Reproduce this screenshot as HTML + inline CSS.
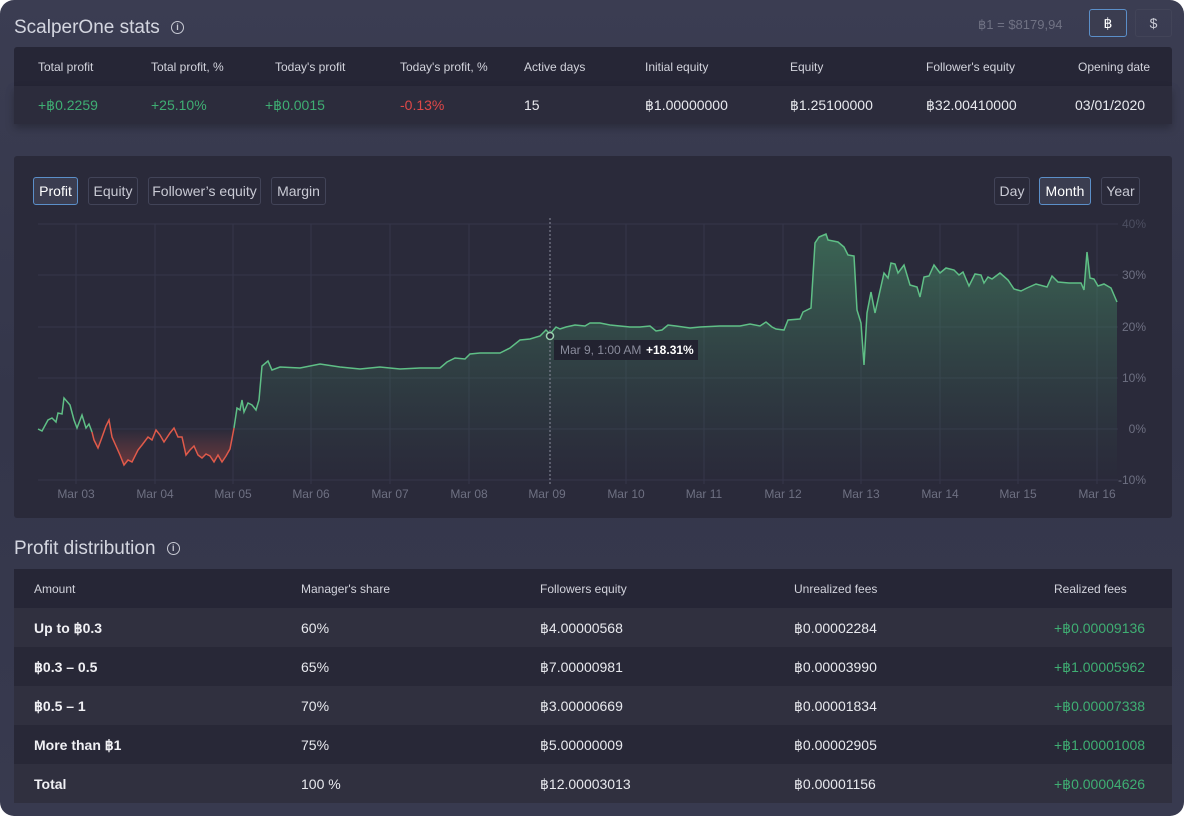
<!DOCTYPE html>
<html><head><meta charset="utf-8"><style>
*{margin:0;padding:0;box-sizing:border-box}
body{width:1184px;height:816px;overflow:hidden;background:#fff;font-family:"Liberation Sans",sans-serif;}
.page{position:absolute;left:0;top:0;width:1184px;height:816px;border-radius:14px;background:linear-gradient(180deg,#3b3d52 0%,#34364a 50%,#383a4f 100%);overflow:hidden}
.a{position:absolute;white-space:nowrap}
.title{font-size:19px;color:#d4d6e0}
.info{display:inline-block;width:13px;height:13px;border:1.3px solid #c8cad4;border-radius:50%;font-size:9px;line-height:11px;text-align:center;color:#c8cad4;font-weight:bold;vertical-align:middle}
.hd{font-size:12px;color:#d2d3dc}
.v{font-size:14px;color:#e8e9ee}
.g{color:#3fae73}.r{color:#e04848}
.btn{position:absolute;height:28px;border:1px solid #424458;border-radius:3px;font-size:14px;color:#c9cad4;line-height:26px;text-align:center}
.btn.on{border-color:#5b8fc9;background:#3b3d50;color:#fff}
.b{font-weight:bold;color:#f0f0f4}
</style></head><body><div class="page">
<div class="a title" style="left:14px;top:17px">ScalperOne stats <span class="info" style="margin-left:6px">i</span></div>
<div class="a" style="left:978px;top:17px;font-size:13px;color:#707284">฿1 = $8179,94</div>
<div class="btn on" style="left:1089px;top:9px;width:38px">฿</div>
<div class="btn" style="left:1135px;top:9px;width:37px">$</div>

<div class="a" style="left:14px;top:47px;width:1158px;height:39px;background:#262636;border-radius:3px 3px 0 0"></div>
<div class="a" style="left:14px;top:86px;width:1158px;height:38px;background:#2c2c3c;box-shadow:0 4px 8px rgba(0,0,0,.25)"></div>
<div class="a hd" style="left:38px;top:60px">Total profit</div>
<div class="a hd" style="left:151px;top:60px">Total profit, %</div>
<div class="a hd" style="left:275px;top:60px">Today's profit</div>
<div class="a hd" style="left:400px;top:60px">Today's profit, %</div>
<div class="a hd" style="left:524px;top:60px">Active days</div>
<div class="a hd" style="left:645px;top:60px">Initial equity</div>
<div class="a hd" style="left:790px;top:60px">Equity</div>
<div class="a hd" style="left:926px;top:60px">Follower's equity</div>
<div class="a hd" style="left:1078px;top:60px">Opening date</div>
<div class="a v g" style="left:38px;top:97px">+฿0.2259</div>
<div class="a v g" style="left:151px;top:97px">+25.10%</div>
<div class="a v g" style="left:265px;top:97px">+฿0.0015</div>
<div class="a v r" style="left:400px;top:97px">-0.13%</div>
<div class="a v" style="left:524px;top:97px">15</div>
<div class="a v" style="left:645px;top:97px">฿1.00000000</div>
<div class="a v" style="left:790px;top:97px">฿1.25100000</div>
<div class="a v" style="left:926px;top:97px">฿32.00410000</div>
<div class="a v" style="left:1075px;top:97px">03/01/2020</div>

<div class="a" style="left:14px;top:156px;width:1158px;height:362px;background:#2a2a3a;border-radius:3px"></div>
<div class="btn on" style="left:33px;top:177px;width:45px">Profit</div>
<div class="btn" style="left:88px;top:177px;width:50px">Equity</div>
<div class="btn" style="left:148px;top:177px;width:113px">Follower’s equity</div>
<div class="btn" style="left:271px;top:177px;width:55px">Margin</div>
<div class="btn" style="left:994px;top:177px;width:36px">Day</div>
<div class="btn on" style="left:1039px;top:177px;width:52px">Month</div>
<div class="btn" style="left:1101px;top:177px;width:39px">Year</div>

<svg class="a" style="left:0;top:0" width="1184" height="816">
<defs>
<linearGradient id="gg" x1="0" y1="230" x2="0" y2="480" gradientUnits="userSpaceOnUse"><stop offset="0" stop-color="#4a9a6c" stop-opacity=".55"/><stop offset="1" stop-color="#3a6a55" stop-opacity="0"/></linearGradient>
<linearGradient id="rg" x1="0" y1="429" x2="0" y2="470" gradientUnits="userSpaceOnUse"><stop offset="0" stop-color="#e05a4a" stop-opacity="0"/><stop offset="1" stop-color="#c84a40" stop-opacity=".45"/></linearGradient>
</defs>
<g stroke="#35364a" stroke-width="1">
<line x1="38" y1="224" x2="1118" y2="224"/><line x1="38" y1="275" x2="1118" y2="275"/><line x1="38" y1="327" x2="1118" y2="327"/><line x1="38" y1="378" x2="1118" y2="378"/><line x1="38" y1="429" x2="1118" y2="429"/><line x1="38" y1="480" x2="1118" y2="480"/>
<line x1="76" y1="224" x2="76" y2="484"/><line x1="155" y1="224" x2="155" y2="484"/><line x1="233" y1="224" x2="233" y2="484"/><line x1="311" y1="224" x2="311" y2="484"/><line x1="390" y1="224" x2="390" y2="484"/><line x1="469" y1="224" x2="469" y2="484"/><line x1="626" y1="224" x2="626" y2="484"/><line x1="704" y1="224" x2="704" y2="484"/><line x1="783" y1="224" x2="783" y2="484"/><line x1="861" y1="224" x2="861" y2="484"/><line x1="940" y1="224" x2="940" y2="484"/><line x1="1018" y1="224" x2="1018" y2="484"/><line x1="1097" y1="224" x2="1097" y2="484"/>
</g>
<polygon fill="url(#gg)" points="234,428 237,408 240,410 242,400 244,412 248,403 252,405 256,410 259,400 262,366 268,361 272,370 280,367 300,368 320,364 340,367 360,369 380,367 400,369 420,368 440,368 447,362 455,358 465,359 470,354 480,353 500,353 510,348 520,340 530,339 540,336 546,330 550,334 556,327 560,329 566,327 575,325 585,326 590,323 600,323 610,325 620,326 630,327 640,327 650,326 656,331 662,330 668,325 676,326 690,328 700,327 720,326 740,326 750,324 760,326 766,322 772,327 776,329 784,330 788,320 800,319 803,312 811,308 815,243 819,237 826,234 828,240 838,242 844,247 848,255 854,256 857,310 861,323 864,365 867,313 871,292 875,313 884,273 888,278 891,263 895,264 898,273 904,265 910,285 917,287 920,297 924,277 929,276 934,265 940,273 946,268 954,270 959,275 963,272 969,286 975,274 981,275 984,283 988,277 992,279 1000,273 1008,280 1014,289 1021,291 1027,288 1036,284 1047,287 1052,276 1058,282 1069,283 1081,283 1084,290 1087,252 1090,278 1094,279 1098,286 1104,284 1111,288 1117,302 1117,480 234,480"/>
<polygon fill="url(#rg)" points="90,429 94,440 98,448 101,440 106,429 112,437 116,446 120,455 124,465 128,460 132,462 138,450 142,445 148,437 152,440 156,430 160,435 164,442 170,433 174,429 178,437 182,437 186,455 190,450 194,446 198,455 202,458 206,454 210,456 214,462 218,455 222,462 226,456 230,449 234,429"/>
<polyline fill="none" stroke="#5fbf86" stroke-width="1.5" points="38,429 42,431 48,420 52,418 56,422 58,413 62,414 64,398 70,405 74,420 77,428 82,415 86,428 89,424 92,432"/>
<polyline fill="none" stroke="#e05a4a" stroke-width="1.5" points="92,432 94,440 98,448 101,440 106,426 109,420 112,437 116,446 120,455 124,465 128,460 132,462 138,450 142,445 148,437 152,440 156,430 160,435 164,442 170,433 174,428 178,437 182,437 186,455 190,450 194,446 198,455 202,458 206,454 210,456 214,462 218,455 222,462 226,456 230,449 234,428"/>
<polyline fill="none" stroke="#5fbf86" stroke-width="1.5" points="234,428 237,408 240,410 242,400 244,412 248,403 252,405 256,410 259,400 262,366 268,361 272,370 280,367 300,368 320,364 340,367 360,369 380,367 400,369 420,368 440,368 447,362 455,358 465,359 470,354 480,353 500,353 510,348 520,340 530,339 540,336 546,330 550,334 556,327 560,329 566,327 575,325 585,326 590,323 600,323 610,325 620,326 630,327 640,327 650,326 656,331 662,330 668,325 676,326 690,328 700,327 720,326 740,326 750,324 760,326 766,322 772,327 776,329 784,330 788,320 800,319 803,312 811,308 815,243 819,237 826,234 828,240 838,242 844,247 848,255 854,256 857,310 861,323 864,365 867,313 871,292 875,313 884,273 888,278 891,263 895,264 898,273 904,265 910,285 917,287 920,297 924,277 929,276 934,265 940,273 946,268 954,270 959,275 963,272 969,286 975,274 981,275 984,283 988,277 992,279 1000,273 1008,280 1014,289 1021,291 1027,288 1036,284 1047,287 1052,276 1058,282 1069,283 1081,283 1084,290 1087,252 1090,278 1094,279 1098,286 1104,284 1111,288 1117,302"/>
<line x1="550" y1="218" x2="550" y2="484" stroke="#8a8c9c" stroke-width="1" stroke-dasharray="2,2"/>
<circle cx="550" cy="336" r="3.5" fill="#2a2a3a" stroke="#9ad0ae" stroke-width="1.5"/>
<rect x="554" y="340" width="144" height="20" fill="#222230"/>
<text x="560" y="354" font-family="Liberation Sans" font-size="12" fill="#8a8c9c">Mar 9, 1:00 AM</text>
<text x="646" y="354" font-family="Liberation Sans" font-size="12" font-weight="bold" fill="#fff">+18.31%</text>
<g font-family="Liberation Sans" font-size="12" fill="#6e7082" text-anchor="middle">
<text x="76" y="498">Mar 03</text><text x="155" y="498">Mar 04</text><text x="233" y="498">Mar 05</text><text x="311" y="498">Mar 06</text><text x="390" y="498">Mar 07</text><text x="469" y="498">Mar 08</text><text x="547" y="498">Mar 09</text><text x="626" y="498">Mar 10</text><text x="704" y="498">Mar 11</text><text x="783" y="498">Mar 12</text><text x="861" y="498">Mar 13</text><text x="940" y="498">Mar 14</text><text x="1018" y="498">Mar 15</text><text x="1097" y="498">Mar 16</text>
</g>
<g font-family="Liberation Sans" font-size="12" fill="#6e7082" text-anchor="end">
<text x="1146" y="228" fill="#4c4e60">40%</text><text x="1146" y="279">30%</text><text x="1146" y="331">20%</text><text x="1146" y="382">10%</text><text x="1146" y="433">0%</text><text x="1146" y="484">-10%</text>
</g>
</svg>

<div class="a title" style="left:14px;top:538px">Profit distribution <span class="info" style="margin-left:6px">i</span></div>
<div class="a" style="left:14px;top:569px;width:1158px;height:39px;background:#262636"></div>
<div class="a" style="left:14px;top:608px;width:1158px;height:39px;background:#30303f"></div>
<div class="a" style="left:14px;top:647px;width:1158px;height:39px;background:#282837"></div>
<div class="a" style="left:14px;top:686px;width:1158px;height:39px;background:#30303f"></div>
<div class="a" style="left:14px;top:725px;width:1158px;height:39px;background:#282837"></div>
<div class="a" style="left:14px;top:764px;width:1158px;height:39px;background:#30303f"></div>
<div class="a hd" style="left:34px;top:582px">Amount</div>
<div class="a hd" style="left:301px;top:582px">Manager's share</div>
<div class="a hd" style="left:540px;top:582px">Followers equity</div>
<div class="a hd" style="left:794px;top:582px">Unrealized fees</div>
<div class="a hd" style="left:1054px;top:582px">Realized fees</div>

<div class="a v b" style="left:34px;top:620px">Up to ฿0.3</div>
<div class="a v" style="left:301px;top:620px">60%</div>
<div class="a v" style="left:540px;top:620px">฿4.00000568</div>
<div class="a v" style="left:794px;top:620px">฿0.00002284</div>
<div class="a v g" style="left:1054px;top:620px">+฿0.00009136</div>

<div class="a v b" style="left:34px;top:659px">฿0.3 – 0.5</div>
<div class="a v" style="left:301px;top:659px">65%</div>
<div class="a v" style="left:540px;top:659px">฿7.00000981</div>
<div class="a v" style="left:794px;top:659px">฿0.00003990</div>
<div class="a v g" style="left:1054px;top:659px">+฿1.00005962</div>

<div class="a v b" style="left:34px;top:698px">฿0.5 – 1</div>
<div class="a v" style="left:301px;top:698px">70%</div>
<div class="a v" style="left:540px;top:698px">฿3.00000669</div>
<div class="a v" style="left:794px;top:698px">฿0.00001834</div>
<div class="a v g" style="left:1054px;top:698px">+฿0.00007338</div>

<div class="a v b" style="left:34px;top:737px">More than ฿1</div>
<div class="a v" style="left:301px;top:737px">75%</div>
<div class="a v" style="left:540px;top:737px">฿5.00000009</div>
<div class="a v" style="left:794px;top:737px">฿0.00002905</div>
<div class="a v g" style="left:1054px;top:737px">+฿1.00001008</div>

<div class="a v b" style="left:34px;top:776px">Total</div>
<div class="a v" style="left:301px;top:776px">100 %</div>
<div class="a v" style="left:540px;top:776px">฿12.00003013</div>
<div class="a v" style="left:794px;top:776px">฿0.00001156</div>
<div class="a v g" style="left:1054px;top:776px">+฿0.00004626</div>
</div></body></html>
